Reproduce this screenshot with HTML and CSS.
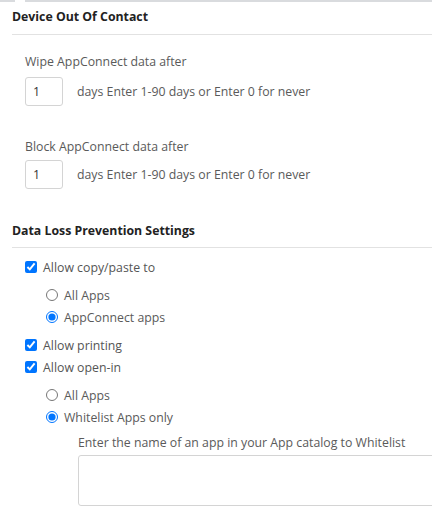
FILE: index.html
```html
<!DOCTYPE html>
<html>
<head>
<meta charset="utf-8">
<link rel="stylesheet" href="styles.css">
</head>
<body>
<div class="topbar"><span class="tb-left"></span><span class="tb-right"></span></div>
<section class="section">
  <h2 class="heading">Device Out Of Contact</h2>
  <div class="field">
    <div class="label">Wipe AppConnect data after</div>
    <div class="row">
      <input class="num" type="text" value="1">
      <span class="hint">days Enter 1-90 days or Enter 0 for never</span>
    </div>
  </div>
  <div class="field">
    <div class="label">Block AppConnect data after</div>
    <div class="row">
      <input class="num" type="text" value="1">
      <span class="hint">days Enter 1-90 days or Enter 0 for never</span>
    </div>
  </div>
</section>
<section class="section dlp">
  <h2 class="heading">Data Loss Prevention Settings</h2>
  <div class="options">
    <label class="check"><input type="checkbox" checked> Allow copy/paste to</label>
    <div class="radios">
      <label class="radio"><input type="radio" name="cp"> All Apps</label>
      <label class="radio"><input type="radio" name="cp" checked> AppConnect apps</label>
    </div>
    <label class="check"><input type="checkbox" checked> Allow printing</label>
    <label class="check"><input type="checkbox" checked> Allow open-in</label>
    <div class="radios">
      <label class="radio"><input type="radio" name="oi"> All Apps</label>
      <label class="radio"><input type="radio" name="oi" checked> Whitelist Apps only</label>
    </div>
    <div class="whitelist">
      <div class="wl-label">Enter the name of an app in your App catalog to Whitelist</div>
      <div class="wl-clip"><textarea class="wl-box"></textarea></div>
    </div>
  </div>
</section>
</body>
</html>
```
FILE: styles.css
```css
html, body { margin: 0; padding: 0; background: #fff; }
body {
  font-family: "Open Sans", "Noto Sans", sans-serif;
  font-size: 12.3px;
  color: #5a5a5a;
  width: 432px;
  overflow: hidden;
}
.topbar { display: flex; height: 2px; gap: 10px; }
.tb-left { width: 15px; background: #d9dbde; }
.tb-right { flex: 1; background: #d9dbde; }
.section { padding-left: 12px; }
.heading {
  margin: 0;
  font-size: 12.3px;
  font-weight: 700;
  color: #222;
  padding: 7px 0 9px;
  line-height: 16px;
  border-bottom: 1px solid #e2e2e2;
}
.field { padding-left: 13px; margin-top: 19px; margin-bottom: 33px; }
.field + .field { margin-top: 0; margin-bottom: 32px; }
.label { line-height: 16px; margin-bottom: 7px; }
.field + .field .label { margin-bottom: 5px; }
.row { display: flex; align-items: center; gap: 14px; }
.num {
  width: 38px; height: 29px; box-sizing: border-box;
  border: 1px solid #d4d4d4; border-radius: 3px;
  font: inherit; color: #333; padding: 0 7px;
  outline: none;
}
.hint { line-height: 16px; }
.dlp .heading { padding-top: 2px; padding-bottom: 8px; }
.options { padding: 8px 0 0 13px; display: flex; flex-direction: column; }
.check, .radio { display: flex; align-items: center; height: 22px; }
.check input { margin: 0 6px 0 0; width: 12px; height: 12px; }
.radio input { margin: 0 6px 0 0; width: 12px; height: 12px; }
.check { color: #555; }
.radios { padding-left: 22px; padding-top: 6px; padding-bottom: 6px; }
.radio { margin-left: -1px; }
.whitelist { padding-left: 53px; margin-top: 1px; }
.wl-label { line-height: 16px; margin-bottom: 4px; white-space: nowrap; }
.wl-clip { overflow: hidden; }
.wl-box {
  display: block; width: 400px; height: 51px; box-sizing: border-box;
  border: 1px solid #d4d4d4; border-radius: 3px; resize: none; outline: none;
}
```
